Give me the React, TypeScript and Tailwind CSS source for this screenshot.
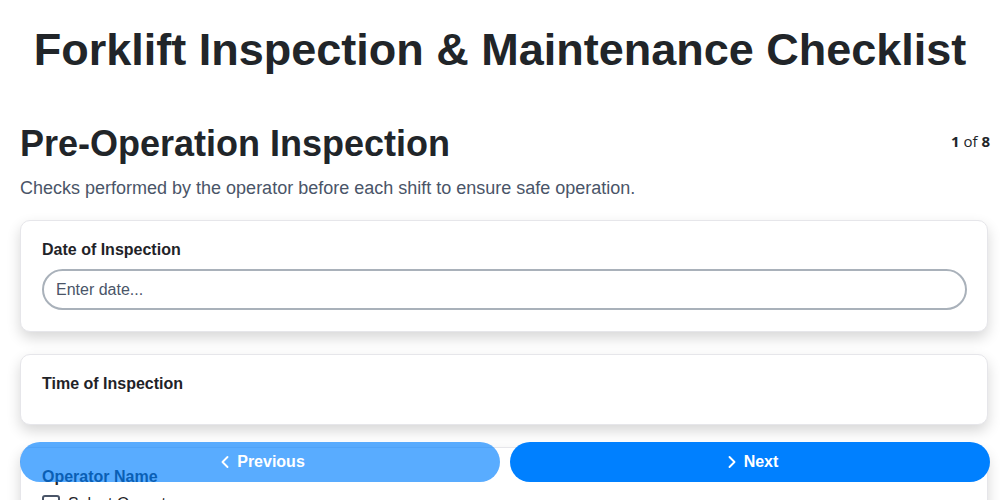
import React from 'react';
import { ChevronLeft, ChevronRight } from 'lucide-react';

const sans = { fontFamily: '"Liberation Sans", Arial, sans-serif' };

const FieldCard: React.FC<{ label: string; children?: React.ReactNode }> = ({ label, children }) => (
  <div className="bg-white border border-[#e6e6ea] rounded-[10px] pl-[21px] pr-5 pt-5 pb-[21px] shadow-[0_6px_14px_rgba(0,0,0,0.16)] mr-[2px]">
    <label className="block text-[16px] leading-[18px] font-bold text-[#1f2328] mb-2.5">{label}</label>
    {children}
  </div>
);

export default function App() {
  return (
    <div className="min-h-screen bg-white" style={sans}>
      <h1 className="text-[45px] leading-[52px] font-bold text-[#212529] text-center pt-6 pb-[46px]">
        Forklift Inspection &amp; Maintenance Checklist
      </h1>

      <div className="pl-5 pr-2.5">
        <div className="flex items-start justify-between">
          <h2 className="text-[36px] leading-[44px] font-bold text-[#212529]">Pre-Operation Inspection</h2>
          <div className="text-[15px] text-[#212529] pt-2" style={{ fontFamily: '"Open Sans", sans-serif' }}>
            <span className="font-bold">1</span> of <span className="font-bold">8</span>
          </div>
        </div>
        <p className="text-[18px] leading-6 text-[#4a5568] mt-[10px] mb-5">
          Checks performed by the operator before each shift to ensure safe operation.
        </p>

        <div className="flex flex-col gap-[22px] pb-24">
          <FieldCard label="Date of Inspection">
            <input
              type="text"
              placeholder="Enter date..."
              className="w-full h-[41px] rounded-full border-2 border-[#a9b1ba] px-3 text-[16px] text-[#1f2328] placeholder:text-[#4a5568] outline-none"
              style={sans}
            />
          </FieldCard>
          <FieldCard label="Time of Inspection">
            <div className="h-0" />
          </FieldCard>
          <FieldCard label="Operator Name">
            <label className="flex items-center gap-2 text-[16px] text-[#1f2328] -mt-1">
              <span className="w-[18px] h-[18px] border-2 border-[#4a5568] rounded-[3px] inline-block" />
              Select Operator
            </label>
          </FieldCard>
        </div>
      </div>

      <div className="fixed left-5 right-[10px] bottom-[18px] flex gap-[10px]">
        <button
          disabled
          className="flex-1 h-10 rounded-full bg-[#0080ff] opacity-65 text-white text-[16px] font-bold flex items-center justify-center gap-0.5"
        >
          <ChevronLeft className="w-5 h-5" strokeWidth={2.25} />
          Previous
        </button>
        <button className="flex-1 h-10 rounded-full bg-[#0080ff] text-white text-[16px] font-bold flex items-center justify-center gap-0.5">
          <ChevronRight className="w-5 h-5" strokeWidth={2.25} />
          Next
        </button>
      </div>
    </div>
  );
}
